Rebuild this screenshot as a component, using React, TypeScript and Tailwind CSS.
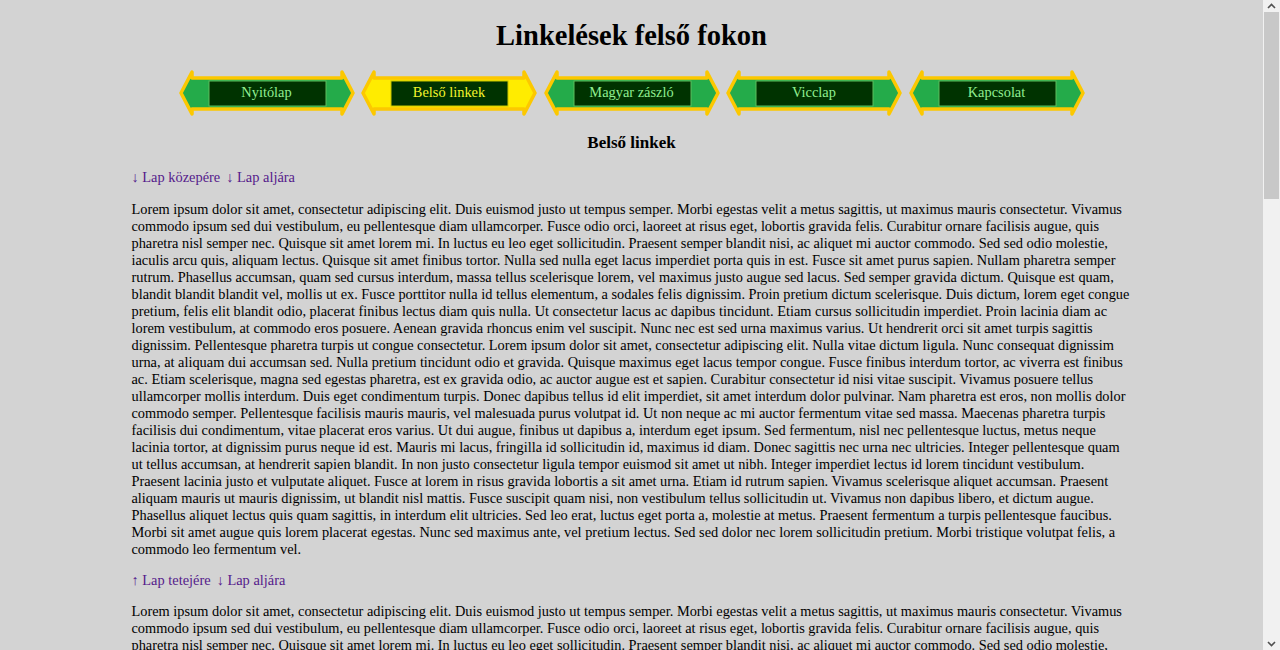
import React from 'react';

const lorem =
    'Lorem ipsum dolor sit amet, consectetur adipiscing elit. Duis euismod justo ut tempus semper. Morbi egestas velit a metus sagittis, ut maximus mauris consectetur. Vivamus commodo ipsum sed dui vestibulum, eu pellentesque diam ullamcorper. Fusce odio orci, laoreet at risus eget, lobortis gravida felis. Curabitur ornare facilisis augue, quis pharetra nisl semper nec. Quisque sit amet lorem mi. In luctus eu leo eget sollicitudin. Praesent semper blandit nisi, ac aliquet mi auctor commodo. Sed sed odio molestie, iaculis arcu quis, aliquam lectus. Quisque sit amet finibus tortor. Nulla sed nulla eget lacus imperdiet porta quis in est. Fusce sit amet purus sapien. Nullam pharetra semper rutrum. Phasellus accumsan, quam sed cursus interdum, massa tellus scelerisque lorem, vel maximus justo augue sed lacus. Sed semper gravida dictum. Quisque est quam, blandit blandit blandit vel, mollis ut ex. Fusce porttitor nulla id tellus elementum, a sodales felis dignissim. Proin pretium dictum scelerisque. Duis dictum, lorem eget congue pretium, felis elit blandit odio, placerat finibus lectus diam quis nulla. Ut consectetur lacus ac dapibus tincidunt. Etiam cursus sollicitudin imperdiet. Proin lacinia diam ac lorem vestibulum, at commodo eros posuere. Aenean gravida rhoncus enim vel suscipit. Nunc nec est sed urna maximus varius. Ut hendrerit orci sit amet turpis sagittis dignissim. Pellentesque pharetra turpis ut congue consectetur. Lorem ipsum dolor sit amet, consectetur adipiscing elit. Nulla vitae dictum ligula. Nunc consequat dignissim urna, at aliquam dui accumsan sed. Nulla pretium tincidunt odio et gravida. Quisque maximus eget lacus tempor congue. Fusce finibus interdum tortor, ac viverra est finibus ac. Etiam scelerisque, magna sed egestas pharetra, est ex gravida odio, ac auctor augue est et sapien. Curabitur consectetur id nisi vitae suscipit. Vivamus posuere tellus ullamcorper mollis interdum. Duis eget condimentum turpis. Donec dapibus tellus id elit imperdiet, sit amet interdum dolor pulvinar. Nam pharetra est eros, non mollis dolor commodo semper. Pellentesque facilisis mauris mauris, vel malesuada purus volutpat id. Ut non neque ac mi auctor fermentum vitae sed massa. Maecenas pharetra turpis facilisis dui condimentum, vitae placerat eros varius. Ut dui augue, finibus ut dapibus a, interdum eget ipsum. Sed fermentum, nisl nec pellentesque luctus, metus neque lacinia tortor, at dignissim purus neque id est. Mauris mi lacus, fringilla id sollicitudin id, maximus id diam. Donec sagittis nec urna nec ultricies. Integer pellentesque quam ut tellus accumsan, at hendrerit sapien blandit. In non justo consectetur ligula tempor euismod sit amet ut nibh. Integer imperdiet lectus id lorem tincidunt vestibulum. Praesent lacinia justo et vulputate aliquet. Fusce at lorem in risus gravida lobortis a sit amet urna. Etiam id rutrum sapien. Vivamus scelerisque aliquet accumsan. Praesent aliquam mauris ut mauris dignissim, ut blandit nisl mattis. Fusce suscipit quam nisi, non vestibulum tellus sollicitudin ut. Vivamus non dapibus libero, et dictum augue. Phasellus aliquet lectus quis quam sagittis, in interdum elit ultricies. Sed leo erat, luctus eget porta a, molestie at metus. Praesent fermentum a turpis pellentesque faucibus. Morbi sit amet augue quis lorem placerat egestas. Nunc sed maximus ante, vel pretium lectus. Sed sed dolor nec lorem sollicitudin pretium. Morbi tristique volutpat felis, a commodo leo fermentum vel.';

const menu = ['Nyitólap', 'Belső linkek', 'Magyar zászló', 'Vicclap', 'Kapcsolat'];

function ArrowButton({ label, active }: { label: string; active?: boolean }) {
    return (
        <a href="#" className="relative flex h-[46px] w-[176px] items-center justify-center no-underline">
            {/* double arrow shape behind the label */}
            <svg className="absolute inset-0" width="176" height="46" viewBox="0 0 176 46">
                <polygon
                    points="2,23 13,2 13,8 163,8 163,2 174,23 163,44 163,39 13,39 13,44"
                    fill={active ? '#ffec00' : '#24ab4a'}
                    stroke="#fcc800"
                    strokeWidth="3.5"
                    strokeLinejoin="round"
                />
                <rect x="30" y="11" width="117" height="25" fill="#003300" stroke={active ? '#c8c400' : '#5cbf5c'} strokeWidth="1" />
            </svg>
            <span className={`relative -mt-[2px] text-[14.4px] leading-[17px] ${active ? 'text-[#f4f52c]' : 'text-[#90ee90]'}`}>{label}</span>
        </a>
    );
}

function JumpLinks({ items }: { items: [string, string][] }) {
    return (
        <p className="flex gap-[6px] text-[14.4px] leading-[17px] text-[#551a8b]">
            {items.map(([arrow, text]) => (
                <a key={text} href="#">
                    {arrow} {text}
                </a>
            ))}
        </p>
    );
}

function FakeScrollbar() {
    return (
        <div className="fixed right-0 top-0 flex h-screen w-[17px] flex-col bg-[#f1f1f1]">
            <div className="flex h-[12px] items-center justify-center">
                <svg width="9" height="6" viewBox="0 0 9 6">
                    <path d="M1 5 L4.5 1.5 L8 5" fill="none" stroke="#505050" strokeWidth="1.6" />
                </svg>
            </div>
            <div className="mx-auto h-[187px] w-[15px] bg-[#c8c8c8]" />
            <div className="flex-1" />
            <div className="flex h-[12px] items-center justify-center">
                <svg width="9" height="6" viewBox="0 0 9 6">
                    <path d="M1 1 L4.5 4.5 L8 1" fill="none" stroke="#505050" strokeWidth="1.6" />
                </svg>
            </div>
        </div>
    );
}

export default function App() {
    return (
        <div className="min-h-screen bg-[#d3d3d3] pb-8 pr-[17px] font-['Liberation_Serif','Times_New_Roman',serif] text-black">
            <div className="mx-auto w-[1000px]">
                <h1 className="pt-[19px] text-center text-[28.5px] font-bold leading-[33px]">Linkelések felső fokon</h1>

                <nav className="mt-[18px] flex justify-center gap-[6.5px]">
                    {menu.map((m) => (
                        <ArrowButton key={m} label={m} active={m === 'Belső linkek'} />
                    ))}
                </nav>

                <h2 className="mt-[17px] text-center text-[17px] font-bold leading-[19px]">Belső linkek</h2>

                <div className="mt-[17px] flex flex-col gap-[14px]">
                    <JumpLinks items={[['↓', 'Lap közepére'], ['↓', 'Lap aljára']]} />
                    <p className="mt-[1px] text-[14.35px] leading-[17px]">{lorem}</p>
                    <JumpLinks items={[['↑', 'Lap tetejére'], ['↓', 'Lap aljára']]} />
                    <p className="text-[14.35px] leading-[17px]">{lorem}</p>
                    <JumpLinks items={[['↑', 'Lap tetejére'], ['↑', 'Lap közepére']]} />
                </div>
            </div>
            <FakeScrollbar />
        </div>
    );
}
